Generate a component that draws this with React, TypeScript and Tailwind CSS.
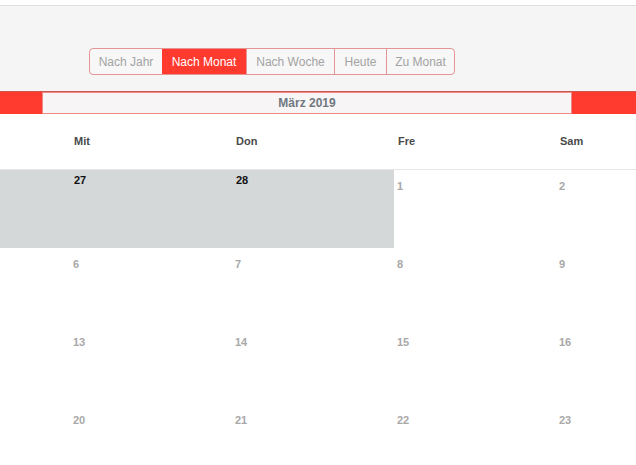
const views = [
  { label: 'Nach Jahr', w: 'w-[72px]' },
  { label: 'Nach Monat', w: 'w-[84px]' },
  { label: 'Nach Woche', w: 'w-[88px]' },
  { label: 'Heute', w: 'w-[52px]' },
  { label: 'Zu Monat', w: 'w-[68px]' },
]
const weekdays = ['Mon', 'Die', 'Mit', 'Don', 'Fre', 'Sam', 'Son']

// März 2019 starts on a Friday; the first row is padded with the end of Februar
const weeks: { day: number; other: boolean }[][] = [
  [25, 26, 27, 28].map((d) => ({ day: d, other: true })).concat([1, 2, 3].map((d) => ({ day: d, other: false }))),
  [4, 5, 6, 7, 8, 9, 10].map((d) => ({ day: d, other: false })),
  [11, 12, 13, 14, 15, 16, 17].map((d) => ({ day: d, other: false })),
  [18, 19, 20, 21, 22, 23, 24].map((d) => ({ day: d, other: false })),
]

export default function App() {
  return (
    <div className="h-[465px] w-[636px] overflow-hidden bg-white font-['Liberation_Sans',Arial,sans-serif]">
      {/* Top strip */}
      <div className="h-[6px] border-b border-[#dedede] bg-white" />

      {/* Toolbar */}
      <div className="h-[85px] bg-[#f5f5f5] pl-[89px] pt-[42px]">
        <div className="flex h-[27px] w-fit overflow-hidden rounded-[4px] border border-[#e49595] bg-[#f7f7f7]">
          {views.map((v, i) => (
            <button
              key={v.label}
              className={
                i === 1
                  ? `${v.w} bg-[#ff3a2e] text-center text-[12px] text-white`
                  : `${v.w} border-l border-[#e49595] text-center text-[12px] text-[#a3a3a3] first:border-l-0`
              }
            >
              {v.label}
            </button>
          ))}
        </div>
      </div>

      {/* Month bar */}
      <div className="flex h-[23px] border-t border-[#c9574f] bg-[#ff3a2e]">
        <div className="w-[42px]" />
        <div className="flex w-[530px] items-center justify-center border border-[#f08a84] bg-[#f7f5f5] text-[12px] font-bold text-[#707880]">
          März 2019
        </div>
        <div className="flex-1" />
      </div>

      {/* Calendar grid, wider than the window */}
      <div className="ml-[-254px] w-[1134px]">
        <div className="grid h-[56px] grid-cols-[repeat(7,162px)] items-center border-b border-[#e6e6e6]">
          {weekdays.map((w) => (
            <div key={w} className="pl-[4px] text-[11px] font-bold text-[#4a4a4a]">
              {w}
            </div>
          ))}
        </div>
        {weeks.map((week, r) => (
          <div key={r} className="grid h-[78px] grid-cols-[repeat(7,162px)]">
            {week.map((c) =>
              c.other ? (
                <div key={c.day} className="bg-[#d5d8d9] pl-[4px] pt-[2px] text-[11px] font-bold text-[#111]">
                  {c.day}
                </div>
              ) : (
                <div key={c.day} className="pl-[3px] pt-[8px] text-[11px] font-bold text-[#a8a8a8]">
                  {c.day}
                </div>
              ),
            )}
          </div>
        ))}
      </div>
    </div>
  )
}
